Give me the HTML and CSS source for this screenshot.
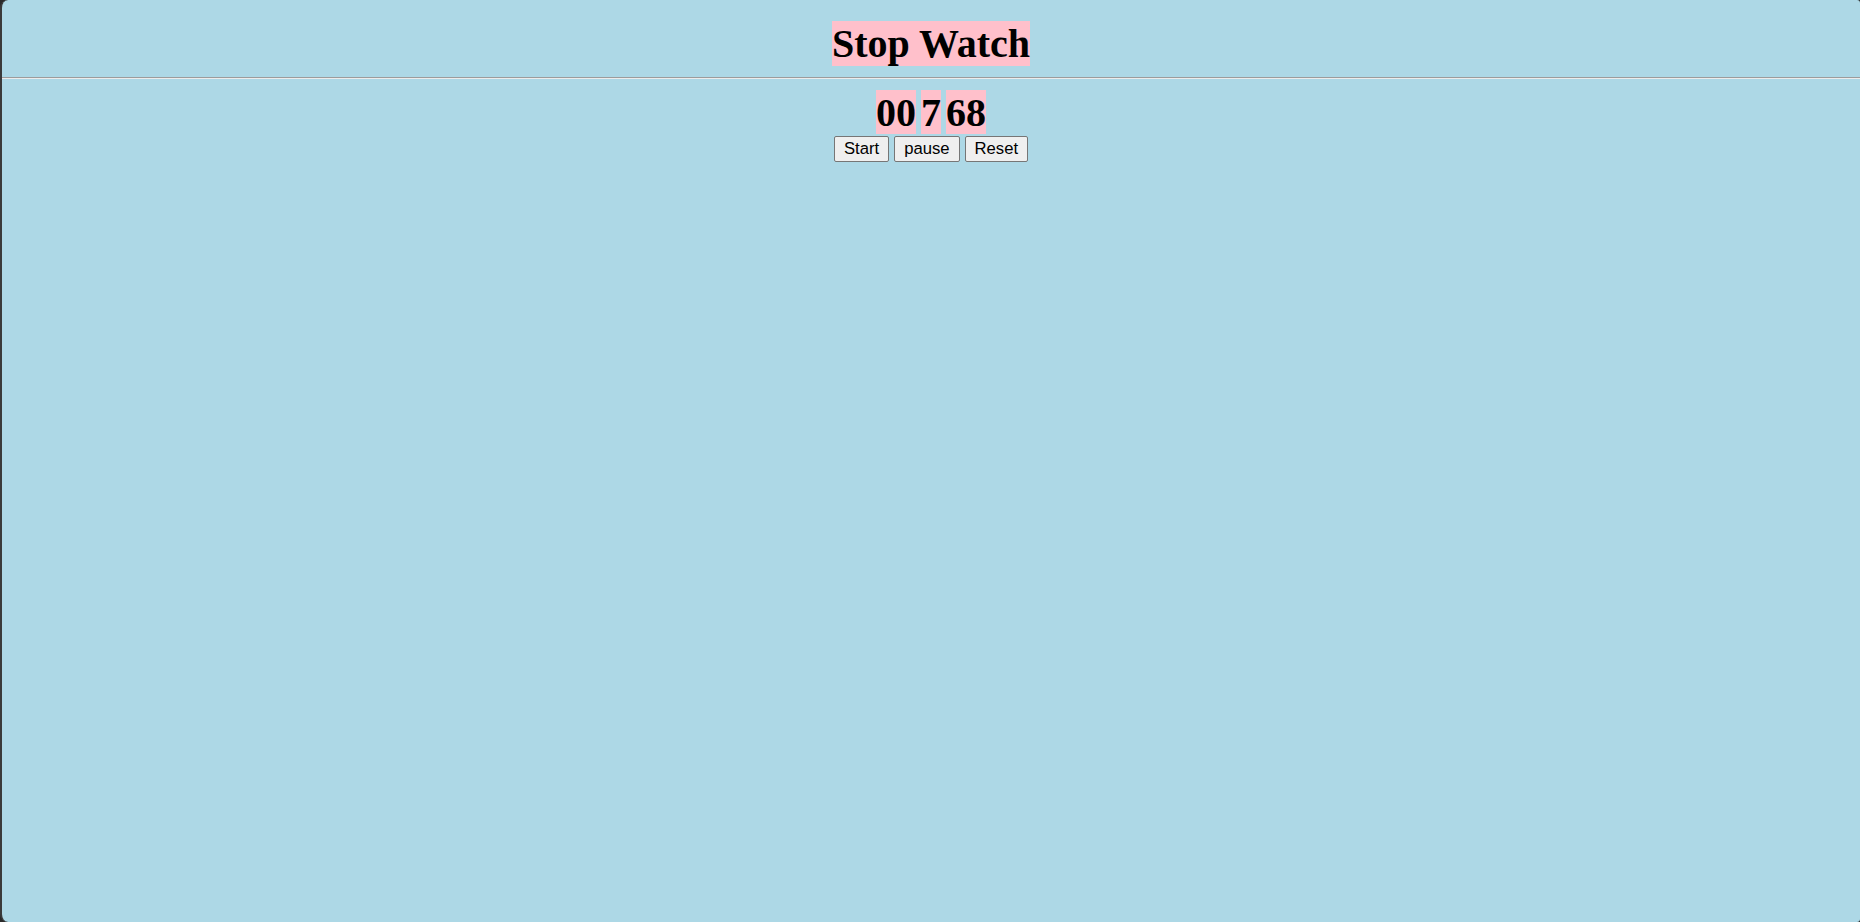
FILE: index.html
```html
<!DOCTYPE html>
<html>
<head>
<meta charset="utf-8">
<title>Stop Watch</title>
<link rel="stylesheet" href="styles.css">
</head>
<body>
  <h1 class="title"><span class="title-text">Stop Watch</span></h1>
  <hr class="divider">
  <div class="timer">
    <span class="digit">00</span>
    <span class="digit">7</span>
    <span class="digit">68</span>
  </div>
  <div class="controls">
    <button class="btn">Start</button>
    <button class="btn">pause</button>
    <button class="btn">Reset</button>
  </div>
</body>
</html>
```
FILE: styles.css
```css
html {
  background: #2a2a2a;
  height: 100%;
}
body {
  margin: 0;
  min-height: 100%;
  box-sizing: border-box;
  background: #add8e6;
  border-left: 2px solid #3a3a3a;
  border-radius: 8px 3px 3px 8px;
  font-family: "Liberation Serif", "Times New Roman", serif;
  font-size: 20px;
  overflow: hidden;
}
.title {
  margin: 21px 0 0;
  text-align: center;
  font-size: 40px;
  font-weight: bold;
  line-height: 45px;
  height: 45px;
}
.title-text {
  display: inline-block;
  background: #ffc0cb;
  height: 45px;
  line-height: 45px;
}
.divider {
  margin: 11px 0 0;
  height: 0;
  border: 0;
  border-top: 1px solid #9c9c9c;
  border-bottom: 1px solid #ececec;
}
.timer {
  display: flex;
  justify-content: center;
  gap: 5px;
  margin-top: 11px;
}
.digit {
  display: block;
  background: #ffc0cb;
  font-size: 40px;
  font-weight: bold;
  height: 44px;
  line-height: 46px;
}
.controls {
  display: flex;
  justify-content: center;
  gap: 5px;
  margin-top: 2px;
}
.btn {
  box-sizing: border-box;
  height: 26px;
  padding: 0 9px;
  margin: 0;
  font-family: "Liberation Sans", Arial, sans-serif;
  font-size: 16.67px;
  color: #000;
  background: #efefef;
  border: 1px solid #767676;
  border-radius: 2px;
}
```
